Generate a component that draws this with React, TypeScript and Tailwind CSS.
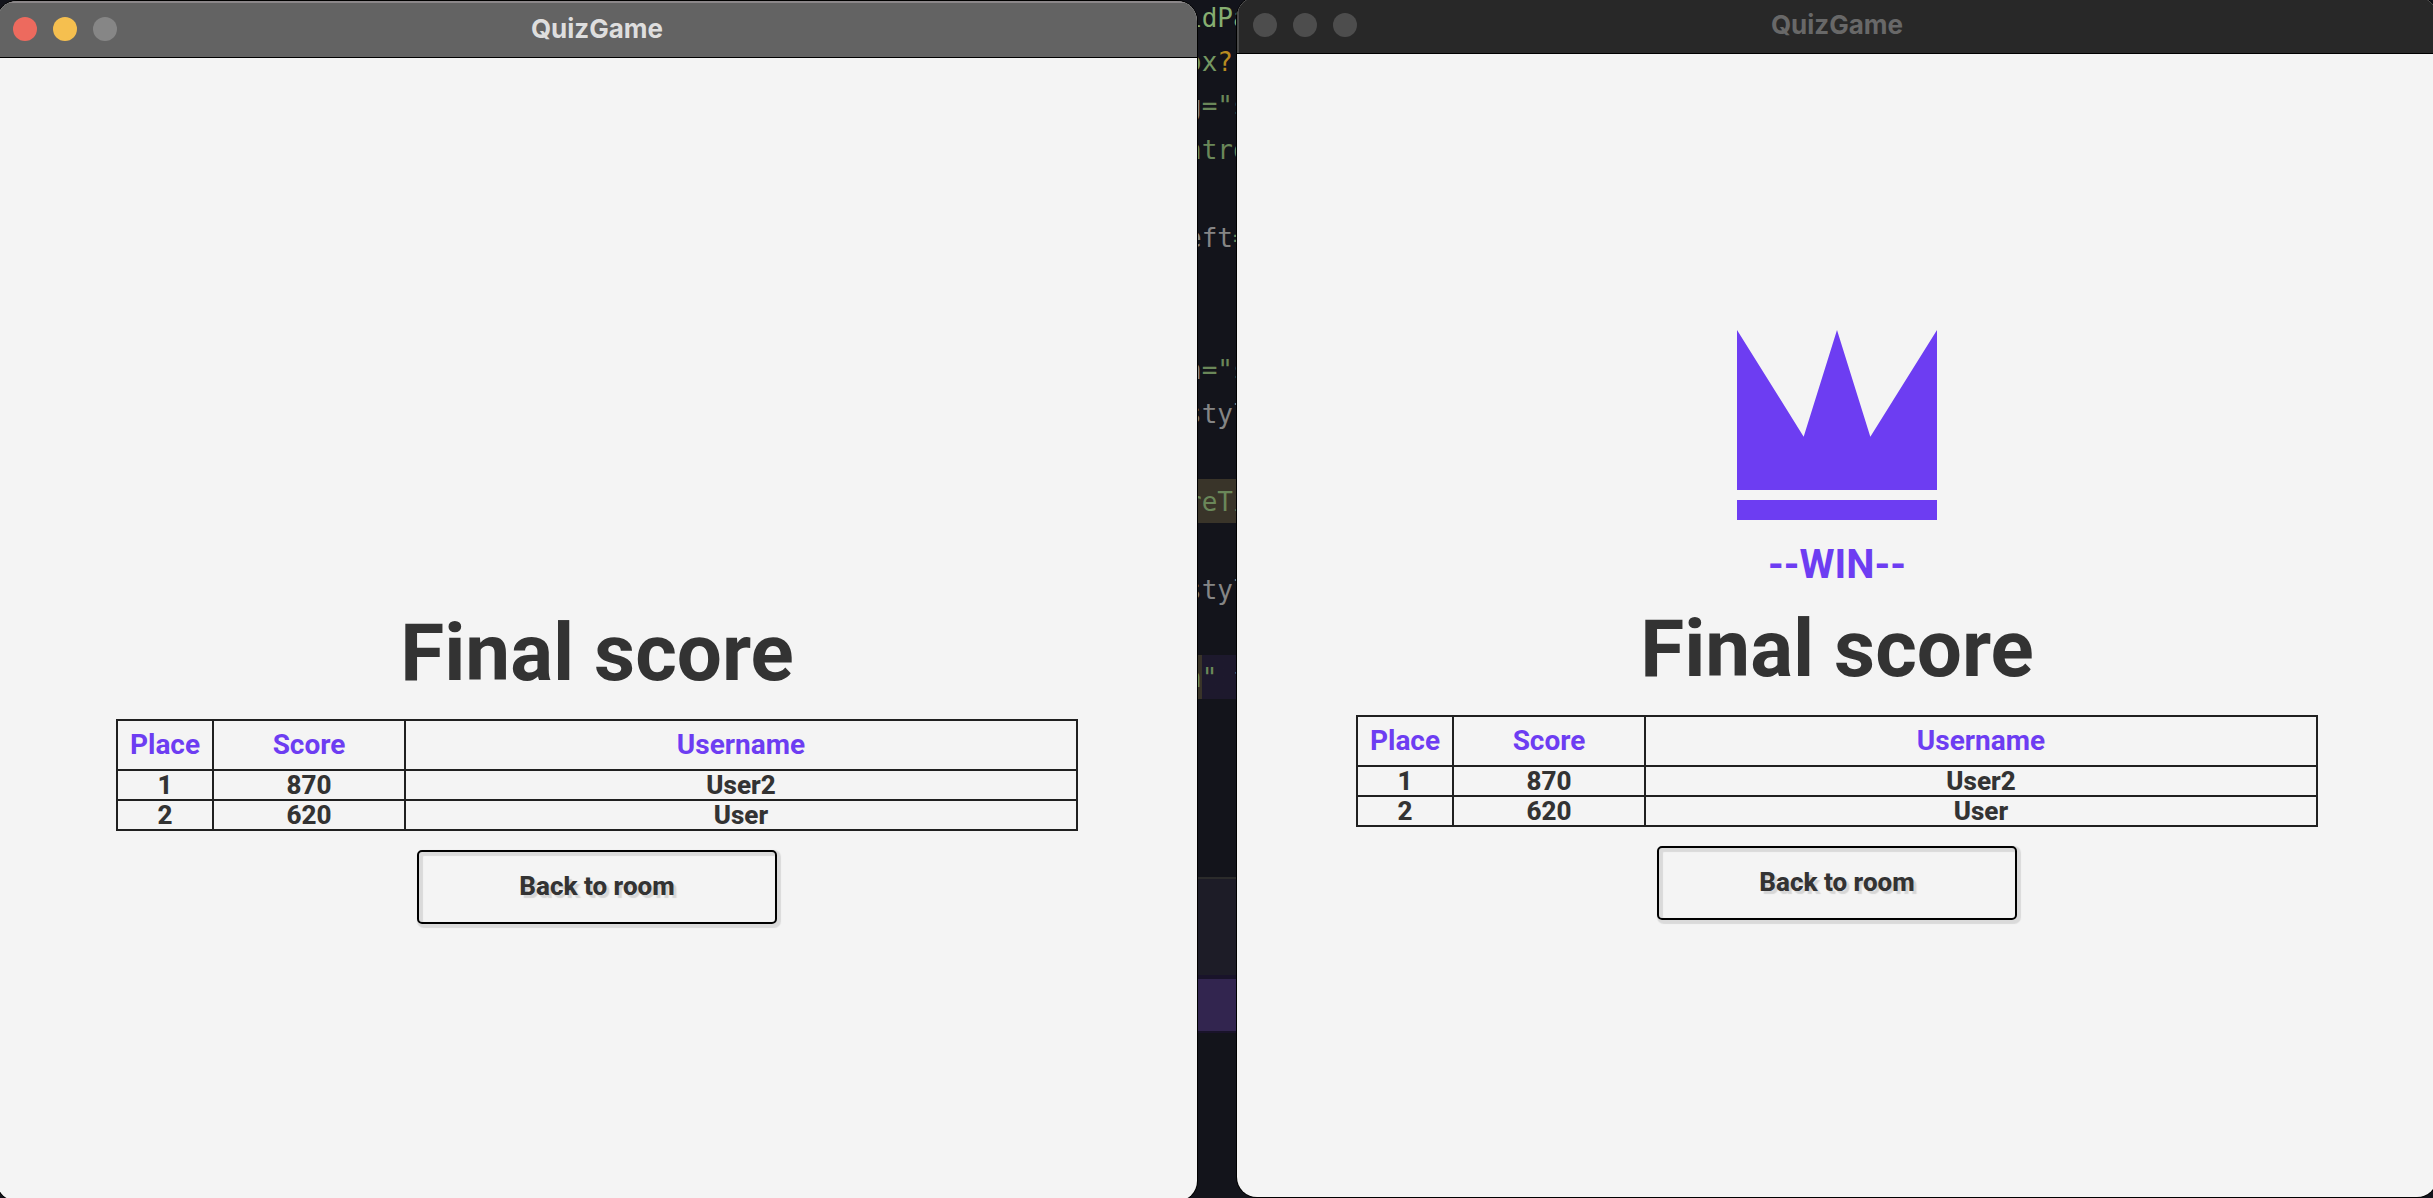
import type { ReactNode } from "react";

type Row = { place: number; score: number; username: string };

const rows: Row[] = [
  { place: 1, score: 870, username: "User2" },
  { place: 2, score: 620, username: "User" },
];

function TitleBar({ active }: { active: boolean }) {
  return (
    <header
      className={`relative flex h-[57px] shrink-0 items-center border-b border-black ${
        active
          ? "bg-[#636363] shadow-[inset_0_2px_0_#8b8789]"
          : "bg-[#282828] shadow-[inset_2px_0_0_#4a4a4a]"
      }`}
    >
      <div className="flex gap-4 pl-4">
        <button
          type="button"
          aria-label="Close"
          className={`size-6 rounded-full ${active ? "bg-[#ed6a5e]" : "bg-[#4d4d4d]"}`}
        />
        <button
          type="button"
          aria-label="Minimize"
          className={`size-6 rounded-full ${active ? "bg-[#f5bf4f]" : "bg-[#4d4d4d]"}`}
        />
        <button
          type="button"
          aria-label="Zoom"
          disabled
          className={`size-6 rounded-full ${active ? "bg-[#868686]" : "bg-[#4d4d4d]"}`}
        />
      </div>
      <h2
        className={`pointer-events-none absolute inset-x-0 text-center font-[Inter,sans-serif] text-[26px] font-bold leading-8 ${
          active ? "text-[#dedede]" : "text-[#686868]"
        }`}
      >
        QuizGame
      </h2>
    </header>
  );
}

function Crown() {
  return (
    <svg viewBox="0 0 200 190" className="h-[190px] w-[200px]" fill="#6d3df2" aria-hidden="true">
      <path d="M0 0 66.67 106.67 100 0l33.33 106.67L200 0v160H0Z" />
      <path d="M0 170h200v20H0Z" />
    </svg>
  );
}

function ScoreTable() {
  return (
    <table className="mt-[19px] w-[962px] max-w-full table-fixed border-collapse text-center text-[#333] [&_td]:border-2 [&_td]:border-[#202020] [&_td]:p-0 [&_th]:border-2 [&_th]:border-[#202020] [&_th]:p-0">
      <colgroup>
        <col className="w-[10%]" />
        <col className="w-[20%]" />
        <col />
      </colgroup>
      <thead>
        <tr className="h-[50px] text-[28px] leading-8 text-[#6d3df2]">
          <th scope="col" className="font-bold">Place</th>
          <th scope="col" className="font-bold">Score</th>
          <th scope="col" className="font-bold">Username</th>
        </tr>
      </thead>
      <tbody>
        {rows.map((row) => (
          <tr key={row.place} className="h-[30px] text-[26px] font-extrabold leading-7">
            <td>{row.place}</td>
            <td>{row.score}</td>
            <td>{row.username}</td>
          </tr>
        ))}
      </tbody>
    </table>
  );
}

function GameWindow({ active, winner, className }: { active: boolean; winner: boolean; className: string }) {
  return (
    <section
      className={`relative flex h-[calc(100vh+2px)] min-w-0 flex-1 flex-col overflow-hidden rounded-[20px] bg-[#f4f4f4] shadow-[0_0_0_1px_#000] ${className}`}
    >
      <TitleBar active={active} />
      <main className="flex flex-1 flex-col items-center justify-center pb-0.5 font-[Roboto,sans-serif]">
        <div className={`flex flex-col items-center gap-5 ${winner ? "" : "invisible"}`}>
          <Crown />
          <p className="text-[40px] font-bold leading-[50px] text-[#6d3df2]">{winner ? "--WIN--" : "\u00a0"}</p>
        </div>
        <h1 className="mt-3 text-[80px] font-bold leading-[94px] text-[#333]">Final score</h1>
        <ScoreTable />
        <button
          type="button"
          className="mt-[19px] h-[74px] w-[360px] rounded-[5px] border-2 border-black text-[26px] font-extrabold text-[#333] shadow-[2px_2px_1px_2px_#dadada,inset_2px_2px_1px_2px_#dadada] [text-shadow:3px_3px_1px_#d6d6d6]"
        >
          Back to room
        </button>
      </main>
    </section>
  );
}

const code: { text: ReactNode; className?: string }[] = [
  { text: "idPa", className: "text-[#86ae70]" },
  { text: <>ox<span className="text-[#b88b20]">?:</span></>, className: "text-[#759862]" },
  { text: <><span className="text-[#858585]">g</span>=&quot;s</> },
  { text: "ntro" },
  { text: "" },
  { text: <><span className="text-[#858585]">eft</span>=</> },
  { text: "" },
  { text: "" },
  { text: <><span className="text-[#858585]">n</span>=&quot;s</> },
  { text: "styl", className: "text-[#858585]" },
  { text: "" },
  { text: "reTi", className: "bg-[#393429]" },
  { text: "" },
  { text: "styl", className: "text-[#858585]" },
  { text: "" },
  {
    text: <>n&quot; <span className="text-[#858585]">f</span></>,
    className: "bg-linear-to-r from-[#393429] from-[16px] to-[#1d192d] to-[16px]",
  },
];

function EditorStrip() {
  return (
    <div className="-mt-[5px] flex h-[calc(100vh+5px)] w-10 shrink-0 flex-col overflow-hidden">
      <div className="-ml-[11px] w-16 whitespace-pre font-['DejaVu_Sans_Mono',monospace] text-[26px] leading-[46px] text-[#6a8759]">
        {code.map((line, i) => (
          <div key={i} className={`h-11 ${line.className ?? ""}`}>
            {line.text}
          </div>
        ))}
      </div>
      <div className="grow" />
      <div className="h-[98px] border-t-2 border-[#2b2b2b] bg-[#1d1c27]" />
      <div className="h-[58px] border-t-4 border-b-2 border-[#19132a] bg-[#32254f]" />
      <div className="h-[165px]" />
    </div>
  );
}

export default function App() {
  return (
    <div className="h-screen overflow-hidden bg-[#13141b]">
      <div className="-mr-1 -ml-[3px] flex items-start">
        <GameWindow active winner={false} className="mt-px" />
        <EditorStrip />
        <GameWindow active={false} winner className="-mt-[3px]" />
      </div>
    </div>
  );
}
